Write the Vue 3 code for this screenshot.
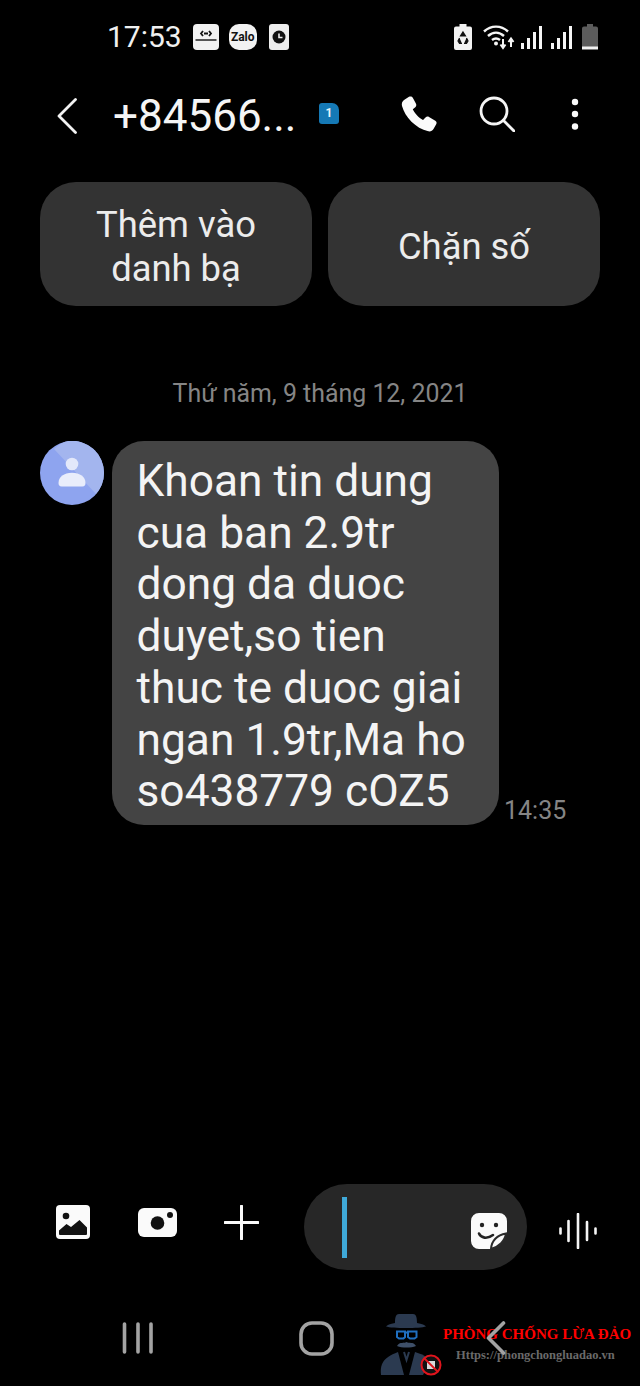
<script setup>
const lines = [
  'Khoan tin dung',
  'cua ban 2.9tr',
  'dong da duoc',
  'duyet,so tien',
  'thuc te duoc giai',
  'ngan 1.9tr,Ma ho',
  'so438779 cOZ5'
]
</script>

<template>
  <div class="phone">
    <div class="status">
      <span class="time">17:53</span>
      <div class="notif">
        <span class="tile tech">
          <svg width="26" height="26" viewBox="0 0 26 26"><rect width="26" height="26" rx="4" fill="#f2f2f2"/><path d="M10 7l-2 2.500 2 2.500M16 7l2 2.500-2 2.500" fill="none" stroke="#111" stroke-width="1.800"/><rect x="11" y="8.500" width="4" height="2" fill="#111"/><rect x="2.500" y="15" width="21" height="2" fill="#555"/></svg>
        </span>
        <span class="zalo">Zalo</span>
        <svg class="clockapp" width="20" height="26" viewBox="0 0 20 26"><rect width="20" height="26" rx="3" fill="#eee"/><circle cx="10" cy="13" r="6.500" fill="#111"/><path d="M10 9.500V13.500H13.500" fill="none" stroke="#eee" stroke-width="1.600"/></svg>
      </div>
      <div class="sys">
        <svg width="18" height="26" viewBox="0 0 18 26"><path d="M5.500 0H12.500V2.500H16a2 2 0 0 1 2 2V24a2 2 0 0 1-2 2H2a2 2 0 0 1-2-2V4.500a2 2 0 0 1 2-2H5.500Z" fill="#f2f2f2"/><path d="M9 8l2.500 4h-5ZM5.500 14l-1.500 3 1.500 2.500H8M12.500 14l1.500 3-1.500 2.500H10" fill="#111" stroke="#111" stroke-width="1.200"/></svg>
        <svg class="wifi" width="33" height="26" viewBox="0 0 33 26"><g fill="none" stroke="#f5f5f5" stroke-width="2.400"><path d="M1 7.500C8 1 18 1 25 7.500"/><path d="M5 12C10 7.500 16 7.500 21 12"/><path d="M9 16C11.500 14 14.500 14 17 16"/></g><circle cx="13" cy="19.500" r="2" fill="#f5f5f5"/><path d="M20 15v8M17.500 20.500l2.500 3.500 2.500-3.500" fill="none" stroke="#f5f5f5" stroke-width="2"/><path d="M28 23v-8M25.500 18l2.500-3.500 2.500 3.500" fill="none" stroke="#f5f5f5" stroke-width="2"/></svg>
        <svg class="bars" width="21" height="26" viewBox="0 0 21 26"><g fill="#f5f5f5"><rect x="0" y="19" width="3" height="6"/><rect x="6" y="14" width="3" height="11"/><rect x="12" y="8" width="3" height="17"/><rect x="18" y="2" width="3" height="23"/></g></svg>
        <svg class="bars" width="21" height="26" viewBox="0 0 21 26"><g fill="#f5f5f5"><rect x="0" y="19" width="3" height="6"/><rect x="6" y="14" width="3" height="11"/><rect x="12" y="8" width="3" height="17"/><rect x="18" y="2" width="3" height="23"/></g></svg>
        <svg class="batt" width="16" height="26" viewBox="0 0 16 26"><path d="M5 0H11V2.500H14a2 2 0 0 1 2 2V25H0V4.500a2 2 0 0 1 2-2H5Z" fill="#5c5c5c"/><rect y="22.500" width="16" height="3" fill="#f2f2f2"/></svg>
      </div>
    </div>

    <div class="header">
      <svg class="back" width="20" height="36" viewBox="0 0 20 36"><path d="M18.500 1.500L2 18l16.500 16.500" fill="none" stroke="#f2f2f2" stroke-width="2.800" stroke-linecap="round" stroke-linejoin="round"/></svg>
      <span class="title">+84566...</span>
      <span class="sim">1</span>
      <div class="spacer"></div>
      <svg class="phone-ic" width="36" height="36" viewBox="0 0 36 36"><path d="M8 .8C9.500 0 11 .4 11.800 1.800L15 7.800C15.600 9 15.300 10.300 14.300 11.200L11.800 13.300C13.500 17.300 17.800 22 22 24L24.500 21.500C25.400 20.600 26.800 20.300 28 21L34.300 24.700C35.600 25.500 36 27 35.200 28.300L32.500 33C31.400 34.800 29.500 35.800 27.300 35.300C14.500 32.300 4 21 1 10C.4 7.500 1.200 5.400 3 4Z" fill="#fafafa"/></svg>
      <svg class="search" width="36" height="36" viewBox="0 0 36 36"><circle cx="15" cy="15" r="13" fill="none" stroke="#f5f5f5" stroke-width="2.800"/><path d="M24.500 24.500L35 35" stroke="#f5f5f5" stroke-width="2.800" stroke-linecap="round"/></svg>
      <svg class="more" width="10" height="32" viewBox="0 0 10 32"><g fill="#fafafa"><circle cx="5" cy="4" r="3.200"/><circle cx="5" cy="16" r="3.200"/><circle cx="5" cy="28.500" r="3.200"/></g></svg>
    </div>

    <div class="actions">
      <div class="action"><span>Thêm vào<br>danh bạ</span></div>
      <div class="action"><span>Chặn số</span></div>
    </div>

    <div class="date">Thứ năm, 9 tháng 12, 2021</div>

    <div class="message">
      <div class="avatar">
        <svg width="64" height="64" viewBox="0 0 64 64"><circle cx="32" cy="32" r="32" fill="#8ea4ef"/><path d="M28 0A32 32 0 0 1 64 32 32 32 0 0 1 56 53L14 8A32 32 0 0 1 28 0Z" fill="#a3b5ee"/><circle cx="32" cy="23" r="6.300" fill="#e3e8fa"/><path d="M21.500 45.500C19.500 45.500 18.500 44 18.500 42C18.500 36 24 31.800 32 31.800S45.500 36 45.500 42C45.500 44 44.500 45.500 42.500 45.500Z" fill="#e9edfb"/></svg>
      </div>
      <div class="bubble">
        <span v-for="l in lines" :key="l" class="line">{{ l }}</span>
      </div>
      <span class="stamp">14:35</span>
    </div>

    <div class="grow"></div>

    <div class="composer">
      <svg class="img-ic" width="34" height="34" viewBox="0 0 34 34"><rect width="34" height="34" rx="4" fill="#fafafa"/><circle cx="10" cy="11" r="3.300" fill="#111"/><path d="M3 29V25.500L10.500 19 15 22 23.500 15 31 22.500V29a1 1 0 0 1-1 1H4a1 1 0 0 1-1-1Z" fill="#111"/></svg>
      <svg class="cam-ic" width="39" height="29" viewBox="0 0 39 29"><rect width="39" height="29" rx="6" fill="#fafafa"/><circle cx="19.500" cy="15" r="6.800" fill="#111"/><circle cx="32" cy="7" r="3" fill="#111"/></svg>
      <svg class="plus-ic" width="35" height="35" viewBox="0 0 35 35"><path d="M17.500 1V34M1 17.500H34" stroke="#fafafa" stroke-width="3" stroke-linecap="round"/></svg>
      <div class="input">
        <span class="caret"></span>
        <svg class="sticker" width="36" height="36" viewBox="0 0 36 36"><path d="M8 0H28a8 8 0 0 1 8 8V20C33 24 25 30 20 36H8a8 8 0 0 1-8-8V8a8 8 0 0 1 8-8Z" fill="#fafafa"/><circle cx="11" cy="12" r="2.200" fill="#222"/><circle cx="25" cy="12" r="2.200" fill="#222"/><path d="M8 20.500C10 25 16 26.500 22 22" fill="none" stroke="#222" stroke-width="2.600" stroke-linecap="round"/><path d="M20 36C20.500 28 26 22 35 20.500 34 28 28 34 20 36Z" fill="#fafafa" stroke="#2a2a2a" stroke-width="2"/></svg>
      </div>
      <svg class="voice-ic" width="38" height="36" viewBox="0 0 38 36"><g stroke="#f5f5f5" stroke-width="2.600" stroke-linecap="round"><path d="M1.500 15.500V20.500M9.500 8V28M19 1V35M28 9V27M36.500 15.500V20.500"/></g></svg>
    </div>

    <div class="nav">
      <svg width="32" height="32" viewBox="0 0 32 32"><g fill="none" stroke="#a3a3a3" stroke-width="3.600" stroke-linecap="round"><path d="M2.500 2V30M16 2V30M29 2V30"/></g></svg>
      <svg class="home" width="35" height="35" viewBox="0 0 35 35"><rect x="2" y="2" width="31" height="31" rx="11" fill="none" stroke="#a3a3a3" stroke-width="3.600"/></svg>
      <svg class="nav-back" width="20" height="34" viewBox="0 0 20 34"><path d="M17.500 2L2.500 17l15 15" fill="none" stroke="#a3a3a3" stroke-width="3.600" stroke-linecap="round" stroke-linejoin="round"/></svg>
    </div>

    <div class="watermark">
      <svg width="56" height="66" viewBox="0 0 56 66">
        <path d="M21 1H35C38 1 39 4 39 10C44 11 47 12 48 13.500 42 15.500 14 15.500 8 13.500 9 12 12 11 17 10 17 4 18 1 21 1Z" fill="#2b3a50"/>
        <path d="M19 18.500H27V24L25.500 25.500H21L19 24ZM30 18.500H38.500V24L36.500 25.500H32L30 24Z" fill="none" stroke="#1f6fc0" stroke-width="2"/>
        <path d="M27 19.500H30" stroke="#1f6fc0" stroke-width="2"/>
        <path d="M19 33C22 28 26 31 28.500 29 31 31 35 28 38 33 33 35 24 35 19 33Z" fill="#3e4f68"/>
        <path d="M3 62C2 52 4 45 20 39L26 62Z" fill="#2b3a50"/>
        <path d="M31 62L37 39C47 42 51 45 51 50L45 62Z" fill="#2b3a50"/>
        <path d="M26 39L28.500 47 31 39" fill="none" stroke="#2b3a50" stroke-width="2"/>
      </svg>
      <svg class="forbid" width="22" height="22" viewBox="0 0 22 22"><circle cx="11" cy="11" r="9.500" fill="#111" stroke="#e0141c" stroke-width="2"/><rect x="7" y="7" width="8" height="8" fill="#d9d9d9"/><path d="M4.500 4.500L17.500 17.500" stroke="#e0141c" stroke-width="1.800"/></svg>
      <div class="wm-text">
        <span class="wm-title">PHÒNG CHỐNG LỪA ĐẢO</span>
        <span class="wm-url">Https://phongchongluadao.vn</span>
      </div>
    </div>
  </div>
</template>

<style>
html, body { margin: 0; background: #000; }
</style>

<style scoped>
.phone {
  position: relative;
  width: 640px;
  height: 1386px;
  background: #000;
  color: #f5f5f5;
  font-family: Roboto, "Noto Sans", sans-serif;
  display: flex;
  flex-direction: column;
  overflow: hidden;
}
.status {
  height: 74px;
  display: flex;
  align-items: center;
  padding: 0 42px 0 107px;
  box-sizing: border-box;
}
.time { font-size: 30px; line-height: 34px; color: #f0f0f0; }
.notif { display: flex; align-items: center; margin-left: 11px; }
.zalo {
  margin-left: 10px;
  width: 28px;
  height: 26px;
  border-radius: 10px;
  background: #f2f2f2;
  color: #111;
  font-size: 12px;
  line-height: 26px;
  font-weight: 700;
  text-align: center;
}
.clockapp { margin-left: 12px; }
.tile { display: flex; }
.sys { margin-left: auto; display: flex; align-items: center; }
.wifi { margin-left: 11px; }
.bars { margin-left: 5px; }
.bars + .bars { margin-left: 9px; }
.batt { margin-left: 10px; }

.header {
  height: 84px;
  display: flex;
  align-items: center;
  padding: 0 60px 0 57px;
}
.back { flex: none; }
.title { margin-left: 36px; font-size: 44px; line-height: 48px; color: #f5f5f5; width: 206px; white-space: nowrap; }
.sim {
  width: 20px;
  height: 21px;
  margin-top: -6px;
  background: #1579b5;
  border-radius: 3px 7px 3px 3px;
  font-size: 12px;
  line-height: 21px;
  font-weight: 700;
  text-align: center;
  color: #eaf4fa;
}
.spacer { flex: 1; }
.phone-ic { margin-right: 42px; margin-bottom: 4px; }
.search { margin-right: 55px; margin-bottom: 4px; }
.more { margin-bottom: 4px; }
.actions {
  margin-top: 24px;
  padding: 0 40px;
  display: flex;
  gap: 16px;
}
.action {
  flex: 1;
  height: 124px;
  box-sizing: border-box;
  padding-top: 5px;
  border-radius: 36px;
  background: #333;
  display: flex;
  align-items: center;
  justify-content: center;
  text-align: center;
  font-size: 36.400px;
  line-height: 44px;
  color: #ececec;
}
.date {
  margin-top: 73px;
  height: 30px;
  line-height: 30px;
  font-size: 24.900px;
  color: #858585;
  text-align: center;
}
.message {
  margin-top: 32px;
  padding-left: 40px;
  display: flex;
  align-items: flex-end;
}
.avatar { align-self: flex-start; height: 64px; margin-right: 8px; }
.bubble {
  width: 387px;
  height: 384px;
  box-sizing: border-box;
  padding: 15px 0 0 24.500px;
  background: #444;
  border-radius: 32px;
  font-size: 44.300px;
  line-height: 51.700px;
  color: #f4f4f4;
}
.line { display: block; white-space: nowrap; }
.stamp { margin-left: 5px; font-size: 25px; line-height: 28px; color: #858585; }
.grow { flex: 1; }
.composer {
  height: 86px;
  display: flex;
  align-items: center;
  padding-left: 56px;
}
.img-ic, .cam-ic, .plus-ic { margin-bottom: 10px; }
.cam-ic { margin-left: 48px; }
.plus-ic { margin-left: 47px; }
.input {
  margin-left: 45px;
  width: 223px;
  height: 86px;
  border-radius: 43px;
  background: #272727;
  display: flex;
  align-items: center;
  padding: 0 20px 0 38px;
  box-sizing: border-box;
}
.caret { width: 5px; height: 61px; background: #3fa9d8; }
.sticker { margin-left: auto; margin-top: 8px; }
.voice-ic { margin-left: 32px; margin-top: 8px; }
.nav {
  height: 116px;
  display: flex;
  align-items: center;
  padding: 20px 0 0 122px;
  box-sizing: border-box;
}
.home { margin-left: 145px; }
.nav-back { margin-left: 152px; position: relative; z-index: 2; }
.watermark {
  position: absolute;
  left: 378px;
  top: 1313px;
  display: flex;
}
.forbid { position: absolute; left: 42px; top: 41px; }
.wm-text { margin-left: 9px; display: flex; flex-direction: column; font-family: "Liberation Serif", serif; font-weight: 700; }
.wm-title { margin-top: 11px; font-size: 15px; line-height: 20px; color: #f00; white-space: nowrap; }
.wm-url { margin-top: 3px; margin-left: 13px; font-size: 12.500px; line-height: 16px; color: #6a6a6a; white-space: nowrap; }
</style>
